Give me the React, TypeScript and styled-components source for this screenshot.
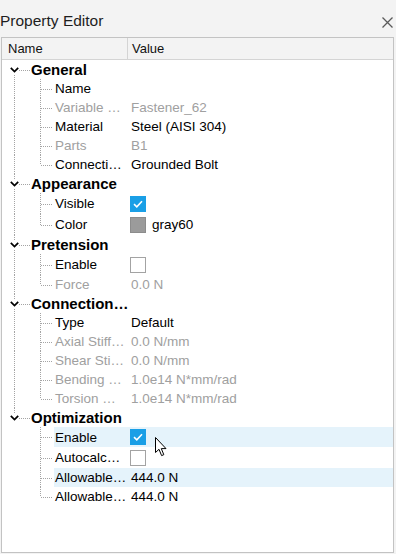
import React from "react";
import styled, { createGlobalStyle } from "styled-components";

const Global = createGlobalStyle`
  html, body { margin: 0; padding: 0; background: #f3f3f3; }
  body { font-family: "Liberation Sans", Arial, sans-serif; overflow: hidden; }
`;

const Window = styled.div`
  width: 396px;
  height: 554px;
  background: #f3f3f3;
  display: flex;
  flex-direction: column;
`;

const TitleBar = styled.div`
  height: 37px;
  display: flex;
  align-items: center;
  justify-content: space-between;
  padding: 0 3px 0 0;
  box-sizing: border-box;
`;

const Title = styled.span`
  font-size: 15.5px;
  color: #1e1e1e;
  margin-top: 4px;
`;

const CloseButton = styled.span`
  width: 11px;
  height: 11px;
  display: flex;
  margin-top: 7px;
`;

const Panel = styled.div`
  margin-left: 1px;
  width: 393px;
  height: 516px;
  box-sizing: border-box;
  border: 1px solid #c3c3c3;
  background: #ffffff;
  display: flex;
  flex-direction: column;
`;

const Header = styled.div`
  display: grid;
  grid-template-columns: 126px 1fr;
  height: 22px;
  box-sizing: border-box;
  border-bottom: 1px solid #d4d4d4;
  background: #f3f3f3;
  font-size: 13px;
  color: #111;
`;

const HeaderCell = styled.div<{ $sep?: boolean; $pad: number }>`
  display: flex;
  align-items: center;
  padding-left: ${(p) => p.$pad}px;
  border-right: ${(p) => (p.$sep ? "1px solid #d4d4d4" : "none")};
`;

const Row = styled.div<{ $h: number }>`
  display: grid;
  grid-template-columns: 126px 1fr;
  height: ${(p) => p.$h}px;
  font-size: 13.5px;
`;

const NameCell = styled.div`
  display: flex;
  align-items: stretch;
  min-width: 0;
`;

const Highlight = styled.div<{ $hl?: boolean }>`
  display: flex;
  align-items: center;
  flex: 1;
  min-width: 0;
  background: ${(p) => (p.$hl ? "#e5f3fb" : "transparent")};
`;

const ValueCell = styled.div<{ $hl?: boolean }>`
  position: relative;
  display: flex;
  align-items: center;
  gap: 6px;
  padding-left: 3px;
  background: ${(p) => (p.$hl ? "#e5f3fb" : "transparent")};
`;

const Slot = styled.span<{ $w: number }>`
  position: relative;
  width: ${(p) => p.$w}px;
  flex: none;
`;

const VLine = styled.span<{ $x: number; $from: string; $to: string }>`
  position: absolute;
  left: ${(p) => p.$x}px;
  top: ${(p) => p.$from};
  bottom: ${(p) => p.$to};
  width: 1px;
  background: repeating-linear-gradient(to bottom, #a4a4a4 0 1px, transparent 1px 2px);
`;

const HLine = styled.span<{ $x: number; $w: number }>`
  position: absolute;
  left: ${(p) => p.$x}px;
  top: 50%;
  width: ${(p) => p.$w}px;
  height: 1px;
  background: repeating-linear-gradient(to right, #a4a4a4 0 1px, transparent 1px 2px);
`;

const Chevron = styled.svg`
  position: absolute;
  left: 8px;
  top: 50%;
  margin-top: -3px;
`;

const GroupLabel = styled.span`
  font-weight: bold;
  font-size: 15px;
  color: #000;
  padding-left: 1px;
  white-space: nowrap;
  align-self: center;
`;

const Label = styled.span<{ $gray?: boolean }>`
  color: ${(p) => (p.$gray ? "#a0a0a0" : "#000")};
  padding-left: 1px;
  white-space: nowrap;
`;

const Value = styled.span<{ $gray?: boolean }>`
  color: ${(p) => (p.$gray ? "#a0a0a0" : "#000")};
  white-space: nowrap;
`;

const Check = styled.span<{ $on?: boolean }>`
  width: 16px;
  height: 16px;
  margin-left: -1px;
  box-sizing: border-box;
  display: flex;
  align-items: center;
  justify-content: center;
  background: ${(p) => (p.$on ? "#1a9fe6" : "#ffffff")};
  border: 1px solid ${(p) => (p.$on ? "#1a9fe6" : "#a3a3a3")};
`;

const Swatch = styled.span`
  width: 16px;
  height: 16px;
  margin-left: -1px;
  box-sizing: border-box;
  background: #9b9b9b;
  border: 1px solid #8c8c8c;
`;

const Cursor = styled.svg`
  position: absolute;
  left: 27px;
  top: 10px;
`;

type Child = {
  name: string;
  value?: string;
  gray?: boolean;
  check?: boolean;
  swatch?: boolean;
  h?: number;
  hl?: boolean;
  cursor?: boolean;
};

type Group = { name: string; children: Child[] };

const groups: Group[] = [
  {
    name: "General",
    children: [
      { name: "Name", value: "" },
      { name: "Variable …", value: "Fastener_62", gray: true },
      { name: "Material", value: "Steel (AISI 304)" },
      { name: "Parts", value: "B1", gray: true },
      { name: "Connecti…", value: "Grounded Bolt" },
    ],
  },
  {
    name: "Appearance",
    children: [
      { name: "Visible", check: true, h: 21 },
      { name: "Color", swatch: true, value: "gray60", h: 21 },
    ],
  },
  {
    name: "Pretension",
    children: [
      { name: "Enable", check: false, h: 21 },
      { name: "Force", value: "0.0 N", gray: true },
    ],
  },
  {
    name: "Connection…",
    children: [
      { name: "Type", value: "Default" },
      { name: "Axial Stiff…", value: "0.0 N/mm", gray: true },
      { name: "Shear Sti…", value: "0.0 N/mm", gray: true },
      { name: "Bending …", value: "1.0e14 N*mm/rad", gray: true },
      { name: "Torsion …", value: "1.0e14 N*mm/rad", gray: true },
    ],
  },
  {
    name: "Optimization",
    children: [
      { name: "Enable", check: true, h: 20, hl: true, cursor: true },
      { name: "Autocalc…", check: false, h: 21 },
      { name: "Allowable…", value: "444.0 N", hl: true },
      { name: "Allowable…", value: "444.0 N" },
    ],
  },
];

const CheckMark = () => (
  <svg width="10" height="8" viewBox="0 0 10 8">
    <path d="M1 4.2 L3.8 6.8 L9 1.2" fill="none" stroke="#fff" strokeWidth="1.6" />
  </svg>
);

const Pointer = () => (
  <Cursor width="13" height="20" viewBox="0 0 13 20">
    <path
      d="M0.5 0.5 L0.5 15.5 L4 12.3 L6.6 18.6 L8.8 17.7 L6.3 11.6 L11 11.6 Z"
      fill="#fff"
      stroke="#000"
      strokeWidth="1"
      strokeLinejoin="miter"
    />
  </Cursor>
);

const CloseIcon = () => (
  <CloseButton>
    <svg width="11" height="11" viewBox="0 0 11 11">
      <path d="M0.5 0.5 L10.5 10.5 M10.5 0.5 L0.5 10.5" stroke="#5a5a5a" strokeWidth="1.3" />
    </svg>
  </CloseButton>
);

export default function App() {
  return (
    <Window>
      <Global />
      <TitleBar>
        <Title>Property Editor</Title>
        <CloseIcon />
      </TitleBar>
      <Panel>
        <Header>
          <HeaderCell $sep $pad={6}>Name</HeaderCell>
          <HeaderCell $pad={4}>Value</HeaderCell>
        </Header>
        {groups.map((g, gi) => {
          const first = gi === 0;
          const last = gi === groups.length - 1;
          return (
            <React.Fragment key={g.name}>
              <Row $h={19}>
                <NameCell>
                  <Slot $w={28}>
                    {!first && <VLine $x={12} $from="0" $to="calc(50% + 4px)" />}
                    {!last && <VLine $x={12} $from="calc(50% + 5px)" $to="0" />}
                    <Chevron width="9" height="6" viewBox="0 0 9 6">
                      <path d="M0.8 0.8 L4.5 4.6 L8.2 0.8" fill="none" stroke="#000" strokeWidth="1.7" />
                    </Chevron>
                    <HLine $x={17} $w={11} />
                  </Slot>
                  <GroupLabel>{g.name}</GroupLabel>
                </NameCell>
                <ValueCell />
              </Row>
              {g.children.map((c, ci) => {
                const lastChild = ci === g.children.length - 1;
                return (
                  <Row key={ci} $h={c.h ?? 19}>
                    <NameCell>
                      <Slot $w={28}>{!last && <VLine $x={12} $from="0" $to="0" />}</Slot>
                      <Slot $w={24}>
                        <VLine $x={10} $from="0" $to={lastChild ? "50%" : "0"} />
                        <HLine $x={11} $w={12} />
                      </Slot>
                      <Highlight $hl={c.hl}>
                        <Label $gray={c.gray}>{c.name}</Label>
                      </Highlight>
                    </NameCell>
                    <ValueCell $hl={c.hl}>
                      {c.check !== undefined && (
                        <Check $on={c.check}>{c.check && <CheckMark />}</Check>
                      )}
                      {c.swatch && <Swatch />}
                      {c.value && <Value $gray={c.gray}>{c.value}</Value>}
                      {c.cursor && <Pointer />}
                    </ValueCell>
                  </Row>
                );
              })}
            </React.Fragment>
          );
        })}
      </Panel>
    </Window>
  );
}
